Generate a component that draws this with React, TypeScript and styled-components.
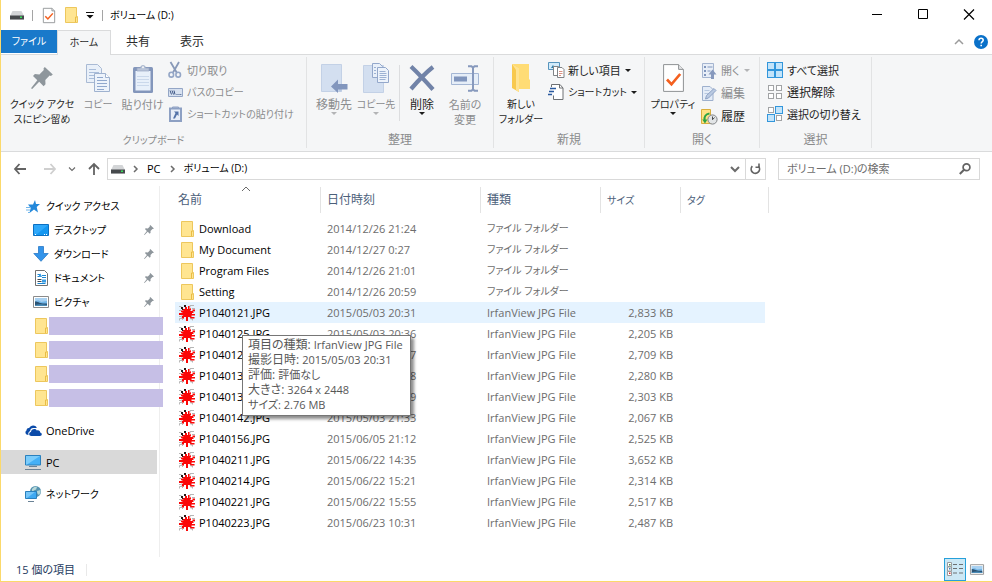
import React from 'react';
import styled, { createGlobalStyle } from 'styled-components';

const GlobalStyle = createGlobalStyle`
  *, *::before, *::after { box-sizing: border-box; }
  body {
    margin: 0;
    background: #fff;
    color: #000;
    font-family: "Open Sans", "Noto Sans CJK JP", sans-serif;
    font-size: 11px;
    line-height: 15px;
    font-feature-settings: "palt";
  }
  button, input { font: inherit; color: inherit; font-feature-settings: inherit; }
  button { border: 0; padding: 0; background: none; white-space: nowrap; }
  a { color: inherit; text-decoration: none; }
  svg { display: block; flex: none; overflow: visible; }
`;

type TextSize = 10 | 11 | 12;

/* ---------- icons ---------- */

const DriveIcon = () => (
  <svg width="14" height="9" viewBox="0 0 14 9" aria-hidden="true">
    <path d="M2.500 0h9L14 5H0z" fill="#d3d5d7" />
    <path d="M0 4.500h14v4H0z" fill="#46494c" />
    <path d="M0 8.500h14v.5H0z" fill="#8b8e91" />
    <rect x="10" y="5.500" width="2" height="1.500" fill="#37e05a" />
  </svg>
);

const CheckPageIcon = ({ w = 12, h = 15 }: { w?: number; h?: number }) => (
  <svg width={w} height={h} viewBox="0 0 21 28" aria-hidden="true" preserveAspectRatio="none">
    <path d="M.6.6h15l4.8 4.8v22H.6z" fill="#fff" stroke="#8f9294" strokeWidth={w > 15 ? 1 : 1.6} />
    <path d="M15.6.6v4.8h4.8" fill="#e4e5e6" stroke="#8f9294" strokeWidth={w > 15 ? 1 : 1.6} />
    <path d="M4 15.500l4.500 4.800L17.200 10" fill="none" stroke="#f4601f" strokeWidth="2.700" />
  </svg>
);

const FolderIcon = ({ w = 13, h = 16 }: { w?: number; h?: number }) => (
  <svg width={w} height={h} viewBox="0 0 13 16" aria-hidden="true">
    <path d="M.5.500h11v9h1v6H.5z" fill="#ffe591" stroke="#edc75d" />
    <path d="M10.500 15V10h1.500" fill="none" stroke="#e9bd45" />
  </svg>
);

const CustomizeIcon = () => (
  <svg width="8" height="7" viewBox="0 0 8 7" aria-hidden="true">
    <path d="M0 0h8v1H0zM.5 3h7L4 6.500z" fill="#111" />
  </svg>
);

const CaretIcon = ({ fill = '#1c1c1c' }: { fill?: string }) => (
  <svg width="6" height="3" viewBox="0 0 6 3" aria-hidden="true">
    <path d="M0 0h6L3 3z" fill={fill} />
  </svg>
);

const PinIcon = ({ size = 22, fill = '#8e969c' }: { size?: number; fill?: string }) => (
  <svg width={size} height={size} viewBox="0 0 22 22" aria-hidden="true">
    <path d="M13.800 0l8 7.600-1.900 1.300-1.300-.3-4.300 4.500.2 4.200-1.900 1.900-4.400-4.500L1.200 22 0 21.200l6.300-8L2 9l1.900-1.900 4.500.4 4.400-4.400-.3-1.500z" fill={fill} />
  </svg>
);

const CopyIcon = () => (
  <svg width="24" height="28" viewBox="0 0 24 28" aria-hidden="true">
    <path d="M.5.500h11l4 4v14H.5z" fill="#e9f0f9" stroke="#a9bad4" />
    <path d="M3 5.500h7M3 8.500h10M3 11.500h10M3 14.500h8" stroke="#a9bdda" />
    <path d="M8.500 9.500h11l4 4v14h-15z" fill="#edf3fb" stroke="#9fb2cf" />
    <path d="M19.500 9.500v4h4" fill="#fff" stroke="#9fb2cf" />
    <path d="M11 13.500h6M11 16.500h10M11 19.500h10M11 22.500h10M11 25.500h7" stroke="#90a8cd" />
  </svg>
);

const PasteIcon = () => (
  <svg width="20" height="29" viewBox="0 0 20 29" aria-hidden="true">
    <rect x="0" y="3" width="20" height="26" rx="1.500" fill="#8396bb" />
    <path d="M2.500 7h15v19.500h-15z" fill="#e8f0fa" />
    <path d="M4 12.500h12M4 15.500h12M4 18.500h12M4 21.500h12" stroke="#cad8eb" />
    <path d="M4 7V4h3.500a2.500 2.500 0 0 1 5 0H16v3z" fill="#b9c4d8" stroke="#98a7c3" strokeWidth=".7" />
    <circle cx="10" cy="3.300" r="1" fill="#f5f6f7" />
  </svg>
);

const CutIcon = () => (
  <svg width="14" height="16" viewBox="0 0 14 16" aria-hidden="true">
    <path d="M2.500 0l6.200 10.500M11 0L5 10.500" stroke="#8899b8" strokeWidth="1.800" fill="none" />
    <ellipse cx="3.300" cy="12.700" rx="2.300" ry="2.400" fill="none" stroke="#94a6c6" strokeWidth="1.600" />
    <ellipse cx="10.200" cy="12.700" rx="2.300" ry="2.400" fill="none" stroke="#94a6c6" strokeWidth="1.600" />
  </svg>
);

const PathIcon = () => (
  <svg width="15" height="9" viewBox="0 0 15 9" aria-hidden="true">
    <path d="M.5.500h14v8H.5z" fill="#d7e1f0" stroke="#94a6c6" />
    <path d="M2 2.500l1.500 4M4 2.500l1.500 4M6 2.500l1 4" stroke="#3d5685" />
    <path d="M8.500 6.500h1M10.500 6.500h1M12.300 6.500h1" stroke="#3d5685" />
  </svg>
);

const PasteShortcutIcon = () => (
  <svg width="13" height="16" viewBox="0 0 13 16" aria-hidden="true">
    <path d="M1 2.500h11v12.500H1z" fill="#e7eef8" stroke="#8da0c3" strokeWidth="2" />
    <path d="M3.500 2.500V1h6v1.500z" fill="#a9b7d0" stroke="#8da0c3" />
    <path d="M5 5.500h4.500v4.500L8 8.500 6 12.500H4L6.500 7z" fill="#5272a8" />
  </svg>
);

const MoveToIcon = () => (
  <svg width="27" height="29" viewBox="0 0 27 29" aria-hidden="true">
    <path d="M.5.500h20v27H.5z" fill="#d3dff0" stroke="#c3d1e6" />
    <path d="M17.500 20.500h3v7h-3z" fill="#b8c9e2" />
    <path d="M10 22.500l7-7v4.500h9.500v5.500H17V29z" fill="#8296bd" />
  </svg>
);

const CopyToIcon = () => (
  <svg width="26" height="30" viewBox="0 0 26 30" aria-hidden="true">
    <path d="M.5 2.500h20v27H.5z" fill="#d3dff0" stroke="#c3d1e6" />
    <path d="M9.500.500h7l3 3v11h-10z" fill="#e9f0f9" stroke="#94a8cb" />
    <path d="M14.500 4.500h8l3 3v12h-11z" fill="#edf3fb" stroke="#94a8cb" />
    <path d="M11 4.500h2M11 7.500h2M11 10.500h2M16.500 8.500h6M16.500 10.500h7M16.500 12.500h7M16.500 14.500h7M16.500 16.500h6" stroke="#9db2d3" />
  </svg>
);

const DeleteIcon = () => (
  <svg width="26" height="26" viewBox="0 0 26 26" aria-hidden="true">
    <path d="M2 1.500Q11 10 24 24.500M24 2Q15 9 2 24" stroke="#7183a8" strokeWidth="4.200" fill="none" />
  </svg>
);

const RenameIcon = () => (
  <svg width="28" height="27" viewBox="0 0 28 27" aria-hidden="true">
    <path d="M.5 8.500h27v11H.5z" fill="#e6eef8" stroke="#a4b6d4" />
    <path d="M3 11.500h13v5H3z" fill="#8095bd" />
    <path d="M17 1.200h3.500l1.500 1.500 1.500-1.500H27M17 25.800h3.500l1.500-1.500 1.500 1.500H27M22 2.500v22" stroke="#8799bd" strokeWidth="2" fill="none" />
  </svg>
);

const NewFolderIcon = () => (
  <svg width="20" height="28" viewBox="0 0 20 28" aria-hidden="true">
    <path d="M2 0h16v15l1 1v9H8z" fill="#ffdc75" />
    <path d="M1 0l7 4v24l-7-4z" fill="#f8c94e" />
    <path d="M1 0l7 4v24l-3-1.700V6z" fill="#ffe391" />
  </svg>
);

const NewItemIcon = () => (
  <svg width="17" height="16" viewBox="0 0 17 16" aria-hidden="true">
    <path d="M.5.500h11v7H.5z" fill="#d3ebfa" stroke="#5694bd" />
    <path d="M3 6l2-3 2 3 1-2 1.500 2z" fill="#2b7dab" />
    <path d="M5.500 4.500h5v9h-5z" fill="#fff" stroke="#808386" />
    <path d="M9.500 5.500h4.500l2 2v8H9.500z" fill="#fff" stroke="#808386" />
    <path d="M11 9.500h3.500M11 11.500h3.500M11 13.500h2" stroke="#d99183" />
  </svg>
);

const ShortcutIcon = () => (
  <svg width="16" height="16" viewBox="0 0 16 16" aria-hidden="true">
    <path d="M5.500 11.500v4H15V4l-3-3.500H3.500V3" fill="#fff" stroke="#6e7174" />
    <path d="M11.500.500V4H15" fill="none" stroke="#6e7174" />
    <path d="M2 4.500h6M1 7.500h5M0 10.500h4" stroke="#2a5a9f" strokeWidth="1.500" />
  </svg>
);

const OpenIcon = () => (
  <svg width="15" height="16" viewBox="0 0 15 16" aria-hidden="true">
    <path d="M.5.500h11v14H.5z" fill="#e8eef7" stroke="#a5b5d0" />
    <path d="M2 3h2v2H2zM2 7h2v2H2zM2 11h2v2H2zM5.500 3.500h5v1h-5zM5.500 7.500h3v1h-3z" fill="#8096bd" />
    <path d="M10.500 6.500l4 5h-2.500V16H9v-4.500H6.500z" fill="#8799bd" />
  </svg>
);

const EditIcon = () => (
  <svg width="14" height="15" viewBox="0 0 14 15" aria-hidden="true">
    <path d="M.5.500h7.500l3 3v11H.5z" fill="#e4ecf7" stroke="#9eb0cd" />
    <path d="M2.500 4.500h5M2.500 7.500h4" stroke="#b8c8df" />
    <path d="M3.500 13l1-3.500 7.500-7 2 2-7.500 7.500z" fill="#b9c9e1" stroke="#8ea2c5" />
  </svg>
);

const HistoryIcon = () => (
  <svg width="17" height="16" viewBox="0 0 17 16" aria-hidden="true">
    <path d="M.5.500h9v8h1v6H.5z" fill="#ffe184" stroke="#d9ae3e" />
    <circle cx="11.500" cy="10.500" r="4.600" fill="#e2e5e7" stroke="#818487" />
    <path d="M11.500 7.500v3.200l2-2.200" stroke="#4a4d50" fill="none" />
    <path d="M8.500 4.500C4.500 5 3 8 3.700 11" stroke="#2da344" strokeWidth="2" fill="none" />
    <path d="M1.200 10.500h5.200L4 14.500z" fill="#2da344" />
  </svg>
);

const SelectIcon = ({ on }: { on: boolean[] }) => (
  <svg width="16" height="16" viewBox="0 0 16 16" aria-hidden="true">
    {on.map((filled, i) => {
      const x = (i % 2) * 8;
      const y = Math.floor(i / 2) * 8;
      return filled ? (
        <rect key={i} x={x + 0.5} y={y + 0.5} width="7" height="7" fill="#c3e4fa" stroke="#3296db" />
      ) : (
        <rect key={i} x={x + 1.5} y={y + 1.5} width="5" height="5" fill="#fff" stroke="#a1a3a5" />
      );
    })}
  </svg>
);

const ArrowIcon = ({ dir, color }: { dir: 'left' | 'right' | 'up'; color: string }) => (
  <svg width="12" height="12" viewBox="0 0 12 12" aria-hidden="true">
    <path
      d={{
        left: 'M12 6H1M5.500 1L1 6l4.500 5',
        right: 'M0 6h11M6.500 1L11 6l-4.500 5',
        up: 'M6 12V1M1 6l5-5 5 5',
      }[dir]}
      fill="none"
      stroke={color}
      strokeWidth="1.800"
    />
  </svg>
);

const ChevronIcon = ({ dir, w = 8, color = '#6b6b6b', weight = 1.5 }: { dir: 'right' | 'down' | 'up'; w?: number; color?: string; weight?: number }) => {
  const d = { right: 'M1 0l3 3-3 3', down: 'M0 1l4 4 4-4', up: 'M0 5l4-4 4 4' }[dir];
  return (
    <svg width={dir === 'right' ? 5 : w} height="6" viewBox={dir === 'right' ? '0 0 5 6' : '0 0 8 6'} aria-hidden="true">
      <path d={d} fill="none" stroke={color} strokeWidth={weight} />
    </svg>
  );
};

const RefreshIcon = () => (
  <svg width="11" height="12" viewBox="0 0 11 12" aria-hidden="true">
    <path d="M2.300 3.200A4.200 4.200 0 1 0 8.500 3.300" fill="none" stroke="#636363" strokeWidth="1.700" />
    <path d="M5.500 4.300H9V.500" fill="none" stroke="#636363" strokeWidth="1.600" />
  </svg>
);

const SearchIcon = () => (
  <svg width="12" height="12" viewBox="0 0 12 12" aria-hidden="true">
    <circle cx="7.500" cy="4.300" r="3.400" fill="none" stroke="#636363" strokeWidth="1.700" />
    <path d="M5 6.800L.8 11" stroke="#636363" strokeWidth="2" />
  </svg>
);

const HelpIcon = () => (
  <svg width="14" height="14" viewBox="0 0 14 14" aria-hidden="true">
    <circle cx="7" cy="7" r="7" fill="#0a71c9" />
    <path d="M5 5.200C5 2.700 9.200 2.700 9.200 5.200 9.200 6.600 7.200 6.700 7.200 8.600" fill="none" stroke="#fff" strokeWidth="1.500" />
    <path d="M6.400 9.700H8v1.600H6.400z" fill="#fff" />
  </svg>
);

const MinimizeIcon = () => (
  <svg width="10" height="10" viewBox="0 0 10 10" aria-hidden="true"><path d="M0 4h10v1H0z" fill="#000" /></svg>
);
const MaximizeIcon = () => (
  <svg width="10" height="10" viewBox="0 0 10 10" aria-hidden="true"><path d="M.5-.5h9v9h-9z" fill="none" stroke="#000" /></svg>
);
const CloseIcon = () => (
  <svg width="10" height="10" viewBox="0 0 10 10" aria-hidden="true"><path d="M0-.5l10 10M10-.5L0 9.500" stroke="#000" strokeWidth="1.200" /></svg>
);

const StarIcon = () => (
  <svg width="14" height="13" viewBox="0 0 14 13" aria-hidden="true">
    <path d="M9 0l1 4h4l-3.300 3L12 12.500 8 9.500 3.500 13l1.200-5L2 4.500h5z" fill="#2388da" />
    <path d="M0 7.500h5M0 10h4M2 12.500h2" stroke="#71b5ea" />
  </svg>
);

const DesktopIcon = () => (
  <svg width="16" height="12" viewBox="0 0 16 12" aria-hidden="true">
    <path d="M.5.500h15v11H.5z" fill="#1497f1" stroke="#0c70c2" />
    <path d="M1 1h14L3 11H1z" fill="#2ea8fa" />
    <path d="M2 10.500h1M11 10.500h1M13 10.500h1" stroke="#fff" />
  </svg>
);

const DownloadIcon = () => (
  <svg width="16" height="16" viewBox="0 0 16 16" aria-hidden="true">
    <path d="M5.500.500h5v7h4.700L8 15.300.800 7.500h4.700z" fill="#3394ea" stroke="#2878c6" strokeWidth=".8" />
  </svg>
);

const DocumentIcon = () => (
  <svg width="13" height="16" viewBox="0 0 13 16" aria-hidden="true">
    <path d="M.5.500h9l3 3v12H.5z" fill="#fff" stroke="#717171" />
    <path d="M2.500 4.500h3M2.500 6.500h2M7 5.500h4M7 7.500h4M2.500 13.500h8" stroke="#1a87d3" />
    <path d="M2.500 9.500h4M2.500 11.500h4" stroke="#3f4952" />
    <path d="M4 5l1.500-1.500L7 7H4zM7 9.500h4v3H7z" fill="#3a9be2" />
  </svg>
);

const PictureIcon = ({ w = 16, h = 12 }: { w?: number; h?: number }) => (
  <svg width={w} height={h} viewBox="0 0 16 12" aria-hidden="true">
    <path d="M.5.500h15v11H.5z" fill="#fff" stroke="#8b8b8b" />
    <path d="M2 2h12v8H2z" fill="#72b5e6" />
    <path d="M2 5.500c2-1.500 4-1.500 6 .5l6-1V2H2z" fill="#a9d1f1" />
    <path d="M2 5.500c3 0 4 1.500 8 2h4V10H2z" fill="#2b5272" />
    <path d="M2 9c4-1 8-1 12 0v1H2z" fill="#4a8cb8" />
  </svg>
);

const OneDriveIcon = () => (
  <svg width="17" height="11" viewBox="0 0 17 11" aria-hidden="true">
    <path d="M3.500 10C.5 10-.5 7 1.500 5.500 1.500 3.500 3 2.800 4.200 3 5.500 0 10.500-.5 11.800 3H9C6.500 2.500 5 4.500 5.200 6 3.300 6.500 3 8.500 3.500 10z" fill="#0b4ba9" />
    <path d="M6.500 11C3.500 11 3.500 7.500 6 7 6 4 10.500 3 11.800 5.500c2-.7 3.500.5 3.300 2C17.500 8 17.300 11 15 11z" fill="#0b4ba9" />
  </svg>
);

const PcIcon = () => (
  <svg width="16" height="15" viewBox="0 0 16 15" aria-hidden="true">
    <path d="M.5.500h15v9.500H.5z" fill="#45b0f6" stroke="#2a80bd" />
    <path d="M1 1h14L2 9.500H1z" fill="#7bccfb" />
    <path d="M4 11.500h8M0 14.500h16" stroke="#6a8296" />
  </svg>
);

const NetworkIcon = () => (
  <svg width="16" height="16" viewBox="0 0 16 16" aria-hidden="true">
    <circle cx="10.500" cy="5.500" r="5.500" fill="#5593b0" />
    <path d="M7 3c2-2.500 4-2.500 5-2-1 1.500 0 2.500-2 3S8 6 7 5.500zM12 5l3.500-1c.5 2-.5 4-1.500 5-1.500-1-2-2-2-4z" fill="#b8d8d9" />
    <path d="M.5 5.500h11v7H.5z" fill="#3fa9f2" stroke="#2a80bd" />
    <path d="M1 6h9l-8 6H1z" fill="#76c6f9" />
    <path d="M3 15.500h6" stroke="#6a8296" />
  </svg>
);

const ImageFileIcon = () => (
  <svg width="16" height="16" viewBox="0 0 16 16" aria-hidden="true">
    <path d="M0 1.500h2.500M11 2.500V.500h4M13 3.500h3M0 5.500h2M0 11.500h2.500v-1M.5 15.500v-2h2.500v-1.500M3 15l1.500-1.500M11.500 12v2h2v1.500M15.500 5v2" stroke="#b6b6b6" fill="none" />
    <path d="M2 2h2v2H2zM5 0h2v2H5zM3 4h2v1H3zM9 1h1v2H9z" fill="#2a1616" />
    <path d="M4 4h2V2h2v2h1V1h1.500v3L12 3v2l-1 1h2.500V4.500H16V6h-1.500v2H13v1h3v1.500h-3.500v1.500h3v1.500H12L10.500 12H9v4H7v-4H5v1.500H3V11l1.500-1H0V8h4L2 7V5.500h2.500z" fill="#fb0707" />
  </svg>
);

const DetailsIcon = () => (
  <svg width="16" height="15" viewBox="0 0 16 15" aria-hidden="true">
    <path d="M.5.500h4v4h-4zM.5 5h4v4h-4zM.5 9.500h4v4h-4z" fill="#fff" stroke="#999c9e" />
    <path d="M6 2.500h4M12 2.500h4M6 6.500h4M12 6.500h4M6 11h4M12 11h4" stroke="#6c7173" />
    <path d="M2 2h1.500v1.500H2z" fill="#4c8b50" />
    <path d="M2 6h1.500v1.500H2z" fill="#3982ba" />
    <path d="M2 10.500h1.500V12H2z" fill="#d83535" />
  </svg>
);

/* ---------- layout parts ---------- */

const Window = styled.div`
  position: relative;
  display: flex;
  flex-direction: column;
  min-height: 100vh;
  border-left: 1px solid #fbd96b;
  border-bottom: 1px solid #fbd96b;
`;

const TitleBar = styled.header`
  display: flex;
  align-items: center;
  height: 30px;
  padding-left: 9px;
`;

const QuickTools = styled.div`
  display: flex;
  align-items: center;
  gap: 8px;
`;

const ToolPair = styled.div`
  display: flex;
  gap: 10px;
  margin-left: 2px;
`;

const Bar = styled.span<{ $h?: number; $light?: boolean }>`
  width: 1px;
  height: ${(p) => p.$h ?? 11}px;
  background: ${(p) => (p.$light ? '#e9e9e9' : '#a5a5a5')};
`;

const Title = styled.h1`
  margin: 0 0 0 7px;
  font-size: 10px;
  font-weight: 400;
`;

const CaptionButtons = styled.div`
  display: flex;
  height: 30px;
  margin-left: auto;
`;

const CaptionButton = styled.button`
  display: flex;
  align-items: center;
  justify-content: center;
  width: 46px;
`;

const TabRow = styled.nav`
  display: flex;
  height: 24px;
  padding-right: 4px;
`;

const Tab = styled.button<{ $kind?: 'file' | 'active' }>`
  width: ${(p) => (p.$kind === 'file' ? 56 : 54)}px;
  height: ${(p) => (p.$kind === 'active' ? 25 : 23)}px;
  padding-bottom: ${(p) => (p.$kind === 'active' ? 2 : 0)}px;
  font-size: ${(p) => (p.$kind ? 10 : 12)}px;
  color: ${(p) => (p.$kind === 'file' ? '#fff' : '#2b2b2b')};
  background: ${(p) => (p.$kind === 'file' ? '#1979ca' : p.$kind === 'active' ? '#f5f6f7' : 'transparent')};
  border: ${(p) => (p.$kind === 'active' ? '1px solid #dadbdc' : '0')};
  border-bottom: 0;
  z-index: 1;
`;

const TabTools = styled.div`
  display: flex;
  align-items: center;
  gap: 11px;
  margin-left: auto;
`;

const Ribbon = styled.section`
  display: flex;
  height: 98px;
  padding: 2px 0 3px;
  background: #f5f6f7;
  border: solid #dadbdc;
  border-width: 1px 0;
`;

const Group = styled.section<{ $w: number }>`
  display: flex;
  flex-direction: column;
  width: ${(p) => p.$w}px;
  border-right: 1px solid #e2e3e4;
`;

const GroupBody = styled.div<{ $pad?: number }>`
  display: flex;
  flex: 1;
  padding-left: ${(p) => p.$pad ?? 0}px;
`;

const GroupTitle = styled.h2<{ $size?: TextSize }>`
  margin: 0;
  font-size: ${(p) => p.$size ?? 12}px;
  line-height: 16px;
  font-weight: 400;
  text-align: center;
  color: #8a8b8c;
`;

const BigButtonRoot = styled.button<{ $w: number; $muted?: boolean; $size: TextSize }>`
  display: flex;
  flex-direction: column;
  align-items: center;
  width: ${(p) => p.$w}px;
  padding-top: 5px;
  font-size: ${(p) => p.$size}px;
  color: ${(p) => (p.$muted ? '#8b8c8e' : '#1f1f1f')};
`;

const BigIcon = styled.span`
  display: flex;
  align-items: center;
  height: 32px;
  margin-bottom: 3px;
`;

const SmallColumn = styled.div<{ $row?: number }>`
  display: grid;
  grid-auto-rows: ${(p) => p.$row ?? 22}px;
  align-content: start;
  padding-top: 2px;
`;

const SmallButtonRoot = styled.button<{ $muted?: boolean; $size: TextSize }>`
  display: flex;
  align-items: center;
  gap: 4px;
  font-size: ${(p) => p.$size}px;
  color: ${(p) => (p.$muted ? '#8b8c8e' : '#1f1f1f')};
`;

const SmallIcon = styled.span`
  display: flex;
  justify-content: center;
  width: 16px;
`;

const InnerBar = styled.span`
  width: 1px;
  height: 56px;
  margin: 8px 0 0 2px;
  background: #dcdddf;
`;

const AddressRow = styled.div`
  display: flex;
  align-items: center;
  height: 34px;
  padding-right: 12px;
`;

const NavButton = styled.button<{ $w: number }>`
  display: flex;
  justify-content: center;
  width: ${(p) => p.$w}px;
`;

const AddressBox = styled.div`
  display: flex;
  align-items: center;
  flex: 1;
  height: 22px;
  margin-left: 2px;
  padding-left: 3px;
  border: 1px solid #d9d9d9;
`;

const Crumbs = styled.nav`
  display: flex;
  align-items: center;
  flex: 1;
  gap: 9px;
  margin-left: 8px;
`;

const CrumbLink = styled.a<{ $size?: TextSize }>`
  padding-bottom: 2px;
  font-size: ${(p) => p.$size ?? 11}px;
`;

const BoxButton = styled.button<{ $divided?: boolean }>`
  display: flex;
  align-items: center;
  justify-content: center;
  width: 20px;
  height: 20px;
  border-left: ${(p) => (p.$divided ? '1px solid #d9d9d9' : '0')};
`;

const SearchBox = styled.form`
  display: flex;
  align-items: center;
  width: 202px;
  height: 22px;
  margin-left: 12px;
  padding: 0 8px;
  border: 1px solid #d9d9d9;
`;

const SearchInput = styled.input`
  flex: 1;
  min-width: 0;
  height: 20px;
  padding: 0 0 2px;
  border: 0;
  outline: 0;
  background: none;
  &::placeholder { color: #6d6d6d; opacity: 1; }
`;

const Body = styled.div`
  display: flex;
  flex: 1;
`;

const Sidebar = styled.nav`
  width: 159px;
  margin-bottom: 1px;
  padding-top: 8px;
  border-right: 1px solid #eeeeee;
`;

const NavSection = styled.ul`
  margin: 0 0 8px;
  padding: 0;
  list-style: none;
`;

const NavLink = styled.a<{ $child?: boolean; $selected?: boolean; $size?: TextSize }>`
  display: flex;
  align-items: center;
  gap: 5px;
  height: 24px;
  margin-right: 2px;
  padding: 0 3px 0 ${(p) => (p.$child ? 32 : 24)}px;
  font-size: ${(p) => p.$size ?? 10}px;
  background: ${(p) => (p.$selected ? '#d9d9d9' : 'transparent')};
`;

const NavText = styled.span`
  flex: 1;
`;

const MaskedName = styled.span`
  flex: 1;
  height: 18px;
  margin: 0 -9px 0 -5px;
  background: #c6bfe6;
`;

const Main = styled.main`
  position: relative;
  flex: 1;
  padding-left: 15px;
`;

const FileTable = styled.table`
  width: 594px;
  table-layout: fixed;
  border-collapse: separate;
  border-spacing: 0;
`;

const HeadCell = styled.th<{ $w: number }>`
  position: relative;
  width: ${(p) => p.$w}px;
  height: 32px;
  padding: 1px 0 5px;
  text-align: left;
  line-height: 26px;
  font-weight: 400;
  color: #4c607a;
`;

const HeadLabel = styled.div<{ $first?: boolean; $size?: TextSize }>`
  height: 26px;
  padding-left: ${(p) => (p.$first ? 3 : 6)}px;
  font-size: ${(p) => p.$size ?? 12}px;
  border-right: 1px solid #e3e3e3;
`;

const SortMark = styled.span`
  position: absolute;
  top: 0;
  left: 67px;
`;

const FileRow = styled.tr<{ $hot?: boolean }>`
  background: ${(p) => (p.$hot ? 'linear-gradient(90deg, #e5f3ff 590px, transparent 590px)' : 'none')};
`;

const Cell = styled.td<{ $right?: boolean; $size?: TextSize }>`
  height: 21px;
  padding: ${(p) => (p.$right ? '0 8px 0 0' : '0 0 0 6px')};
  text-align: ${(p) => (p.$right ? 'right' : 'left')};
  font-size: ${(p) => p.$size ?? 11}px;
  color: #6d6d6d;
  white-space: nowrap;
`;

const NameCell = styled.div`
  display: flex;
  align-items: center;
  gap: 4px;
  margin-left: -2px;
  color: #000;
`;

const FileIconBox = styled.span`
  display: flex;
  justify-content: center;
  width: 16px;
`;

const Tooltip = styled.div`
  position: absolute;
  top: 149px;
  left: 82px;
  width: 169px;
  padding: 1px 5px 3px;
  border: 1px solid #767676;
  background: #fff;
  box-shadow: 3px 3px 3px rgba(0, 0, 0, 0.45);
  color: #575757;
`;

const TipLine = styled.p`
  display: flex;
  align-items: baseline;
  gap: 3px;
  height: 15px;
  margin: 0;
  white-space: nowrap;
`;

const TipLabel = styled.span<{ $size?: TextSize }>`
  font-size: ${(p) => p.$size ?? 12}px;
`;

const StatusBar = styled.footer`
  display: flex;
  align-items: center;
  height: 23px;
  padding: 0 4px 0 15px;
  color: #243a5e;
`;

const StatusText = styled.span`
  display: flex;
  align-items: center;
  gap: 11px;
`;

const ViewButtons = styled.div`
  display: flex;
  margin-left: auto;
`;

const ViewButton = styled.button<{ $on?: boolean }>`
  display: flex;
  align-items: center;
  justify-content: center;
  width: 22px;
  height: 23px;
  background: ${(p) => (p.$on ? '#cce8f5' : 'none')};
  border: ${(p) => (p.$on ? '1px solid #26a0da' : '0')};
`;

/* ---------- composed controls ---------- */

type BigProps = {
  icon: React.ReactNode;
  lines: string[];
  w: number;
  muted?: boolean;
  menu?: boolean;
  size?: TextSize;
};

const BigButton = ({ icon, lines, w, muted, menu, size = 11 }: BigProps) => (
  <BigButtonRoot type="button" $w={w} $muted={muted} $size={size}>
    <BigIcon>{icon}</BigIcon>
    {lines.map((line) => <span key={line}>{line}</span>)}
    {menu && <CaretIcon fill={muted ? '#b3b4b6' : '#1c1c1c'} />}
  </BigButtonRoot>
);

type SmallProps = { icon: React.ReactNode; text: string; muted?: boolean; menu?: boolean; size?: TextSize };

const SmallButton = ({ icon, text, muted, menu, size = 11 }: SmallProps) => (
  <SmallButtonRoot type="button" $muted={muted} $size={size}>
    <SmallIcon>{icon}</SmallIcon>
    <span>{text}</span>
    {menu && <CaretIcon fill={muted ? '#b3b4b6' : '#1c1c1c'} />}
  </SmallButtonRoot>
);

/* ---------- data ---------- */

const quickLinks = [
  { name: 'デスクトップ', icon: <DesktopIcon /> },
  { name: 'ダウンロード', icon: <DownloadIcon /> },
  { name: 'ドキュメント', icon: <DocumentIcon /> },
  { name: 'ピクチャ', icon: <PictureIcon /> },
];

type Item = { name: string; date: string; size?: string };

const items: Item[] = [
  { name: 'Download', date: '2014/12/26 21:24' },
  { name: 'My Document', date: '2014/12/27 0:27' },
  { name: 'Program Files', date: '2014/12/26 21:01' },
  { name: 'Setting', date: '2014/12/26 20:59' },
  { name: 'P1040121.JPG', date: '2015/05/03 20:31', size: '2,833 KB' },
  { name: 'P1040125.JPG', date: '2015/05/03 20:36', size: '2,205 KB' },
  { name: 'P1040129.JPG', date: '2015/05/03 20:37', size: '2,709 KB' },
  { name: 'P1040130.JPG', date: '2015/05/03 20:38', size: '2,280 KB' },
  { name: 'P1040131.JPG', date: '2015/05/03 20:39', size: '2,303 KB' },
  { name: 'P1040142.JPG', date: '2015/05/03 21:33', size: '2,067 KB' },
  { name: 'P1040156.JPG', date: '2015/06/05 21:12', size: '2,525 KB' },
  { name: 'P1040211.JPG', date: '2015/06/22 14:35', size: '3,652 KB' },
  { name: 'P1040214.JPG', date: '2015/06/22 15:21', size: '2,314 KB' },
  { name: 'P1040221.JPG', date: '2015/06/22 15:55', size: '2,517 KB' },
  { name: 'P1040223.JPG', date: '2015/06/23 10:31', size: '2,487 KB' },
];

const tipLines: { label: string; value: string; size?: TextSize; valueSize?: TextSize }[] = [
  { label: '項目の種類:', value: 'IrfanView JPG File' },
  { label: '撮影日時:', value: '2015/05/03 20:31' },
  { label: '評価:', value: '評価なし' },
  { label: '大きさ:', value: '3264 x 2448' },
  { label: 'サイズ:', value: '2.76 MB', size: 11 },
];

export default function App() {
  return (
    <Window>
      <GlobalStyle />

      <TitleBar>
        <QuickTools>
          <DriveIcon />
          <Bar />
          <ToolPair>
            <button type="button" aria-label="プロパティ"><CheckPageIcon /></button>
            <button type="button" aria-label="新しいフォルダー"><FolderIcon /></button>
          </ToolPair>
          <button type="button" aria-label="カスタマイズ"><CustomizeIcon /></button>
          <Bar />
        </QuickTools>
        <Title>ボリューム (D:)</Title>
        <CaptionButtons>
          <CaptionButton type="button" aria-label="最小化"><MinimizeIcon /></CaptionButton>
          <CaptionButton type="button" aria-label="最大化"><MaximizeIcon /></CaptionButton>
          <CaptionButton type="button" aria-label="閉じる"><CloseIcon /></CaptionButton>
        </CaptionButtons>
      </TitleBar>

      <TabRow>
        <Tab type="button" $kind="file">ファイル</Tab>
        <Tab type="button" $kind="active">ホーム</Tab>
        <Tab type="button">共有</Tab>
        <Tab type="button">表示</Tab>
        <TabTools>
          <button type="button" aria-label="リボンの最小化"><ChevronIcon dir="up" color="#9b9b9b" /></button>
          <button type="button" aria-label="ヘルプ"><HelpIcon /></button>
        </TabTools>
      </TabRow>

      <Ribbon>
        <Group $w={306}>
          <GroupBody $pad={5}>
            <BigButton w={72} icon={<PinIcon />} lines={['クイック アクセ', 'スにピン留め']} size={10} />
            <BigButton w={40} icon={<CopyIcon />} lines={['コピー']} muted size={10} />
            <BigButton w={49} icon={<PasteIcon />} lines={['貼り付け']} muted />
            <SmallColumn>
              <SmallButton icon={<CutIcon />} text="切り取り" muted />
              <SmallButton icon={<PathIcon />} text="パスのコピー" muted size={10} />
              <SmallButton icon={<PasteShortcutIcon />} text="ショートカットの貼り付け" muted size={10} />
            </SmallColumn>
          </GroupBody>
          <GroupTitle $size={10}>クリップボード</GroupTitle>
        </Group>

        <Group $w={187}>
          <GroupBody $pad={6}>
            <BigButton w={42} icon={<MoveToIcon />} lines={['移動先']} muted menu size={12} />
            <BigButton w={42} icon={<CopyToIcon />} lines={['コピー先']} muted menu size={10} />
            <InnerBar />
            <BigButton w={44} icon={<DeleteIcon />} lines={['削除']} menu size={12} />
            <BigButton w={42} icon={<RenameIcon />} lines={['名前の', '変更']} muted />
          </GroupBody>
          <GroupTitle>整理</GroupTitle>
        </Group>

        <Group $w={151}>
          <GroupBody>
            <BigButton w={54} icon={<NewFolderIcon />} lines={['新しい', 'フォルダー']} size={10} />
            <SmallColumn>
              <SmallButton icon={<NewItemIcon />} text="新しい項目" menu />
              <SmallButton icon={<ShortcutIcon />} text="ショートカット" menu size={10} />
            </SmallColumn>
          </GroupBody>
          <GroupTitle>新規</GroupTitle>
        </Group>

        <Group $w={115}>
          <GroupBody>
            <BigButton w={56} icon={<CheckPageIcon w={21} h={28} />} lines={['プロパティ']} menu size={10} />
            <SmallColumn $row={23}>
              <SmallButton icon={<OpenIcon />} text="開く" muted menu />
              <SmallButton icon={<EditIcon />} text="編集" muted size={12} />
              <SmallButton icon={<HistoryIcon />} text="履歴" size={12} />
            </SmallColumn>
          </GroupBody>
          <GroupTitle>開く</GroupTitle>
        </Group>

        <Group $w={112}>
          <GroupBody $pad={7}>
            <SmallColumn>
              <SmallButton icon={<SelectIcon on={[true, true, true, true]} />} text="すべて選択" />
              <SmallButton icon={<SelectIcon on={[false, false, false, false]} />} text="選択解除" size={12} />
              <SmallButton icon={<SelectIcon on={[false, true, true, false]} />} text="選択の切り替え" />
            </SmallColumn>
          </GroupBody>
          <GroupTitle>選択</GroupTitle>
        </Group>
      </Ribbon>

      <AddressRow>
        <NavButton type="button" $w={38} aria-label="戻る"><ArrowIcon dir="left" color="#636363" /></NavButton>
        <NavButton type="button" $w={22} aria-label="進む"><ArrowIcon dir="right" color="#cfcfcf" /></NavButton>
        <NavButton type="button" $w={22} aria-label="最近表示した場所"><ChevronIcon dir="down" w={6} /></NavButton>
        <NavButton type="button" $w={22} aria-label="上へ"><ArrowIcon dir="up" color="#636363" /></NavButton>
        <AddressBox>
          <DriveIcon />
          <Crumbs aria-label="アドレス">
            <ChevronIcon dir="right" />
            <CrumbLink href="#pc">PC</CrumbLink>
            <ChevronIcon dir="right" />
            <CrumbLink href="#d" $size={10}>ボリューム (D:)</CrumbLink>
          </Crumbs>
          <BoxButton type="button" aria-label="以前の場所"><ChevronIcon dir="down" weight={2} /></BoxButton>
          <BoxButton type="button" $divided aria-label="更新"><RefreshIcon /></BoxButton>
        </AddressBox>
        <SearchBox onSubmit={(e) => e.preventDefault()}>
          <SearchInput type="text" aria-label="検索" placeholder="ボリューム (D:)の検索" />
          <button type="submit" aria-label="検索を実行"><SearchIcon /></button>
        </SearchBox>
      </AddressRow>

      <Body>
        <Sidebar aria-label="ナビゲーション">
          <NavSection>
            <li><NavLink href="#quick"><SmallIcon><StarIcon /></SmallIcon><NavText>クイック アクセス</NavText></NavLink></li>
            {quickLinks.map((link) => (
              <li key={link.name}>
                <NavLink href="#quick" $child>
                  <SmallIcon>{link.icon}</SmallIcon>
                  <NavText>{link.name}</NavText>
                  <PinIcon size={10} />
                </NavLink>
              </li>
            ))}
            {[1, 2, 3, 4].map((n) => (
              <li key={n}>
                <NavLink href="#quick" $child aria-label="フォルダー">
                  <SmallIcon><FolderIcon /></SmallIcon>
                  <MaskedName />
                </NavLink>
              </li>
            ))}
          </NavSection>
          <NavSection>
            <li><NavLink href="#onedrive" $size={11}><SmallIcon><OneDriveIcon /></SmallIcon><NavText>OneDrive</NavText></NavLink></li>
          </NavSection>
          <NavSection>
            <li><NavLink href="#pc" $selected $size={11}><SmallIcon><PcIcon /></SmallIcon><NavText>PC</NavText></NavLink></li>
          </NavSection>
          <NavSection>
            <li><NavLink href="#network"><SmallIcon><NetworkIcon /></SmallIcon><NavText>ネットワーク</NavText></NavLink></li>
          </NavSection>
        </Sidebar>

        <Main>
          <FileTable>
            <thead>
              <tr>
                <HeadCell $w={146} scope="col">
                  <SortMark><ChevronIcon dir="up" weight={1} /></SortMark>
                  <HeadLabel $first>名前</HeadLabel>
                </HeadCell>
                <HeadCell $w={160} scope="col"><HeadLabel>日付時刻</HeadLabel></HeadCell>
                <HeadCell $w={120} scope="col"><HeadLabel>種類</HeadLabel></HeadCell>
                <HeadCell $w={80} scope="col"><HeadLabel $size={10}>サイズ</HeadLabel></HeadCell>
                <HeadCell $w={88} scope="col"><HeadLabel $size={10}>タグ</HeadLabel></HeadCell>
              </tr>
            </thead>
            <tbody>
              {items.map((item) => (
                <FileRow key={item.name} $hot={item.name === 'P1040121.JPG'}>
                  <Cell>
                    <NameCell>
                      <FileIconBox>{item.size ? <ImageFileIcon /> : <FolderIcon />}</FileIconBox>
                      {item.name}
                    </NameCell>
                  </Cell>
                  <Cell>{item.date}</Cell>
                  <Cell $size={item.size ? 11 : 10}>{item.size ? 'IrfanView JPG File' : 'ファイル フォルダー'}</Cell>
                  <Cell $right>{item.size}</Cell>
                  <Cell />
                </FileRow>
              ))}
            </tbody>
          </FileTable>
          <Tooltip role="tooltip">
            {tipLines.map((line) => (
              <TipLine key={line.label}>
                <TipLabel $size={line.size}>{line.label}</TipLabel>
                <span>{line.value}</span>
              </TipLine>
            ))}
          </Tooltip>
        </Main>
      </Body>

      <StatusBar>
        <StatusText>15 個の項目<Bar $h={12} $light /></StatusText>
        <ViewButtons>
          <ViewButton type="button" $on aria-label="詳細"><DetailsIcon /></ViewButton>
          <ViewButton type="button" aria-label="大アイコン"><PictureIcon w={14} h={11} /></ViewButton>
        </ViewButtons>
      </StatusBar>
    </Window>
  );
}
